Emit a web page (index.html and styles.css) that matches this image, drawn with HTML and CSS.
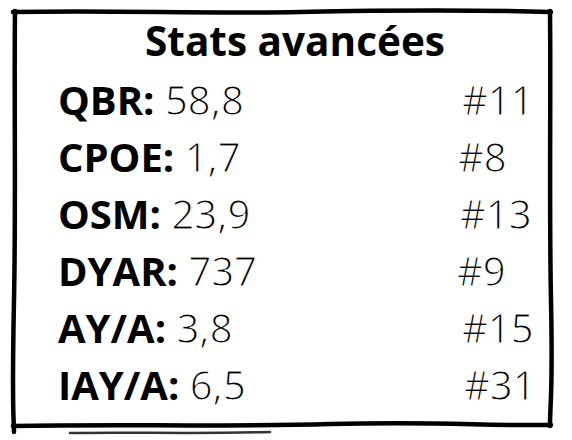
FILE: index.html
```html
<!DOCTYPE html>
<html lang="fr">
<head>
  <meta charset="UTF-8" />
  <meta name="viewport" content="width=device-width, initial-scale=1.0" />
  <title>Stats avancées</title>
  <link rel="stylesheet" href="styles.css">
</head>
<body>

  <div class="card">
    <!-- hand drawn frame -->
    <svg class="frame" width="572" height="440" viewBox="0 0 572 440">
      <path d="M13 12 C120 10 200 14 300 12 S480 10 551 12" />
      <path d="M15 11 C14 100 16 200 14 300 S13 400 14 432" />
      <path d="M550 11 C551 100 549 200 551 300 S550 400 550 426" />
      <path d="M13 426 C120 424 220 427 330 424 S480 426 551 425" />
      <path class="thin" d="M70 433 C130 432 200 434 270 432" />
    </svg>

    <h2 class="title">Stats avancées</h2>

    <div class="stats">
      <div class="row">
        <span class="stat"><b>QBR:</b> <span class="val">58,8</span></span>
        <span class="rank r-11">#11</span>
      </div>
      <div class="row">
        <span class="stat"><b>CPOE:</b> <span class="val">1,7</span></span>
        <span class="rank r-8">#8</span>
      </div>
      <div class="row">
        <span class="stat"><b>OSM:</b> <span class="val">23,9</span></span>
        <span class="rank r-13">#13</span>
      </div>
      <div class="row">
        <span class="stat"><b>DYAR:</b> <span class="val">737</span></span>
        <span class="rank r-9">#9</span>
      </div>
      <div class="row">
        <span class="stat"><b>AY/A:</b> <span class="val">3,8</span></span>
        <span class="rank r-15">#15</span>
      </div>
      <div class="row">
        <span class="stat"><b>IAY/A:</b> <span class="val">6,5</span></span>
        <span class="rank r-31">#31</span>
      </div>
    </div>
  </div>

</body>
</html>
```

FILE: styles.css
```css
body {
  margin: 0;
  padding: 0;
  background-color: #fff;
  font-family: "Open Sans", sans-serif;
  color: #000;
}

.card {
  position: relative;
  width: 572px;
  height: 440px;
  box-sizing: border-box;
  padding: 17px 0 0 58px;
}

/* Frame */
.frame {
  position: absolute;
  left: 0;
  top: 0;
  pointer-events: none;
}

.frame path {
  fill: none;
  stroke: #000;
  stroke-width: 4.5;
  stroke-linecap: round;
}

.frame path.thin {
  stroke-width: 2.5;
  stroke: #333;
}

/* Title */
.title {
  margin: 0;
  padding-left: 87px;
  font-size: 40.5px;
  line-height: 48px;
  font-weight: 700;
}

.stats {
  margin-top: 6px;
}

.row {
  display: flex;
  height: 57px;
  align-items: center;
  font-size: 40px;
  line-height: 57px;
  font-weight: 400;
}

.stat {
  width: 400px;
}

.stat b {
  font-weight: 700;
}

/* light numbers */
.val,
.rank {
  -webkit-text-stroke: 1.1px #fff;
}

.rank {
  display: block;
}

.r-11 { margin-left: 4px; }
.r-8 { margin-left: 0; }
.r-13 { margin-left: 2px; }
.r-9 { margin-left: -1px; }
.r-15 { margin-left: 4px; }
.r-31 { margin-left: 6px; }
```
